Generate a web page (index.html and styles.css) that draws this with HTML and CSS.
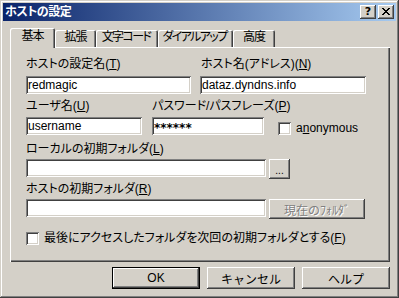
FILE: index.html
```html
<!DOCTYPE html>
<html lang="ja">
<head>
    <meta charset="UTF-8">
    <title>ホストの設定</title>
    <link rel="stylesheet" href="styles.css">
</head>
<body>

<div class="window">
    <div class="titlebar">
        <span class="title">ホストの設定</span>
        <div class="caption-btns">
            <div class="cap help">?</div>
            <div class="cap">
                <svg width="8" height="7" viewBox="0 0 8 7"><path d="M0 0h2v1h1v1h2v-1h1v-1h2v1h-1v1h-1v1h-1v1h1v1h1v1h1v1h-2v-1h-1v-1h-2v1h-1v1h-2v-1h1v-1h1v-1h1v-1h-1v-1h-1v-1h-1z" fill="#000"/></svg>
            </div>
        </div>
    </div>

    <div class="tabs">
        <div class="tab active" style="width:45px">基本</div>
        <div class="tab" style="width:41px">拡張</div>
        <div class="tab tight" style="width:62px">文字コード</div>
        <div class="tab tight" style="width:75px">ダイアルアップ</div>
        <div class="tab" style="width:42px">高度</div>
    </div>

    <div class="panel">
        <div class="row">
            <div class="field-group" style="width:165px">
                <label>ホストの設定名(<u>T</u>)</label>
                <input class="edit" type="text" value="redmagic">
            </div>
            <div class="field-group" style="width:166px">
                <label class="shift">ホスト名(アドレス)(<u>N</u>)</label>
                <input class="edit" type="text" value="dataz.dyndns.info">
            </div>
        </div>

        <div class="row row-user">
            <div class="field-group narrow" style="width:116px">
                <label>ユーザ名(<u>U</u>)</label>
                <input class="edit" type="text" value="username">
            </div>
            <div class="field-group narrow" style="width:112px">
                <label>パスワード/パスフレーズ(<u>P</u>)</label>
                <input class="edit pass" type="text" value="******">
            </div>
            <div class="checkline anon">
                <span class="check"></span>
                <span>a<u>n</u>onymous</span>
            </div>
        </div>

        <div class="row-block local">
            <label>ローカルの初期フォルダ(<u>L</u>)</label>
            <div class="row">
                <input class="edit wide" type="text" value="">
                <button class="btn small">...</button>
            </div>
        </div>

        <div class="row-block host">
            <label>ホストの初期フォルダ(<u>R</u>)</label>
            <div class="row">
                <input class="edit wide" type="text" value="">
                <button class="btn current" disabled>現在のﾌｫﾙﾀﾞ</button>
            </div>
        </div>

        <div class="checkline last">
            <span class="check"></span>
            <span>最後にアクセスしたフォルダを次回の初期フォルダとする(<u>F</u>)</span>
        </div>
    </div>

    <div class="actions">
        <button class="btn push default">OK</button>
        <button class="btn push">キャンセル</button>
        <button class="btn push">ヘルプ</button>
    </div>
</div>

</body>
</html>
```

FILE: styles.css
```css
* {
    box-sizing: border-box;
}
body {
    margin: 0;
    background-color: #d4d0c8;
    font-family: "Liberation Sans", "Noto Sans CJK JP", sans-serif;
    font-size: 12px;
    font-feature-settings: "palt";
    color: #000;
}
.window {
    width: 399px;
    height: 298px;
    padding: 3px;
    background-color: #d4d0c8;
    box-shadow: inset -1px -1px #404040, inset 1px 1px #d4d0c8, inset -2px -2px #808080, inset 2px 2px #fff;
    display: flex;
    flex-direction: column;
}
.titlebar {
    height: 18px;
    display: flex;
    align-items: center;
    justify-content: space-between;
    padding: 0 2px 0 2px;
    background: linear-gradient(to right, #0a246a, #a6caf0);
    color: #fff;
}
.title {
    font-weight: bold;
    line-height: 13px;
    letter-spacing: -0.5px;
}
.caption-btns {
    display: flex;
    gap: 2px;
}
.cap {
    width: 16px;
    height: 14px;
    background-color: #d4d0c8;
    box-shadow: inset -1px -1px #404040, inset 1px 1px #fff, inset -2px -2px #808080;
    display: flex;
    align-items: center;
    justify-content: center;
    color: #000;
}
.cap svg {
    display: block;
    margin-top: -1px;
}
.help {
    font-family: "DejaVu Sans", sans-serif;
    font-weight: bold;
    font-size: 11px;
    line-height: 11px;
    padding-bottom: 1px;
}

/* tabs */
.tabs {
    display: flex;
    align-items: flex-end;
    height: 19px;
    margin-top: 7px;
    padding-left: 7px;
}
.tab {
    height: 17px;
    padding-top: 1px;
    line-height: 13px;
    text-align: center;
    letter-spacing: -1px;
    border-radius: 2px 2px 0 0;
    box-shadow: inset 1px 1px #fff, inset -1px 0 #404040, inset -2px 0 #808080;
    white-space: nowrap;
}
.tab.tight {
    letter-spacing: -1.6px;
    padding-right: 2px;
}
.tab.active {
    height: 20px;
    margin-bottom: -1px;
    padding-top: 2px;
    position: relative;
    z-index: 1;
    background-color: #d4d0c8;
}

/* panel */
.panel {
    width: 380px;
    height: 215px;
    margin-left: 7px;
    padding: 11px 0 0 16px;
    box-shadow: inset 1px 1px #fff, inset -1px -1px #404040, inset -2px -2px #808080;
}
.row {
    display: flex;
    gap: 9px;
}
.field-group label,
.row-block label {
    display: block;
    line-height: 13px;
    white-space: nowrap;
}
.field-group label {
    margin-bottom: 5px;
}
.field-group .shift {
    margin-left: 1px;
}
.field-group.narrow label {
    margin-bottom: 4px;
}
.row-user {
    margin-top: 6px;
    gap: 10px;
}
.edit {
    display: block;
    width: 100%;
    height: 18px;
    margin: 0;
    padding: 0 2px;
    border: none;
    outline: none;
    background-color: #fff;
    box-shadow: inset 1px 1px #808080, inset -1px -1px #fff, inset 2px 2px #404040, inset -2px -2px #d4d0c8;
    font-family: inherit;
    font-size: 12px;
    color: #000;
}
.edit.pass {
    font-family: "DejaVu Sans", sans-serif;
    font-weight: bold;
    font-size: 12px;
    padding-top: 3px;
}
.edit.wide {
    width: 240px;
    flex: none;
}
.checkline {
    display: flex;
    align-items: center;
    gap: 5px;
    line-height: 13px;
    white-space: nowrap;
}
.check {
    width: 13px;
    height: 13px;
    flex: none;
    background-color: #fff;
    box-shadow: inset 1px 1px #808080, inset -1px -1px #fff, inset 2px 2px #404040, inset -2px -2px #d4d0c8;
}
.anon {
    margin-left: 4px;
    margin-top: 22px;
    align-self: flex-start;
}
.row-block label {
    margin-bottom: 3px;
}
.row-block .row {
    gap: 3px;
}
.local {
    margin-top: 8px;
}
.host {
    margin-top: 4px;
}
.last {
    margin-top: 13px;
}

/* buttons */
.btn {
    border: none;
    padding: 0;
    margin: 0;
    background-color: #d4d0c8;
    box-shadow: inset -1px -1px #404040, inset 1px 1px #fff, inset -2px -2px #808080;
    font-family: inherit;
    font-size: 12px;
    color: #000;
}
.btn.small {
    width: 21px;
    height: 20px;
    font-size: 10px;
    line-height: 10px;
    padding-top: 4px;
}
.btn.current {
    width: 96px;
    height: 20px;
    color: #808080;
    text-shadow: 1px 1px #fff;
}
.actions {
    display: flex;
    justify-content: flex-end;
    gap: 7px;
    margin-top: 5px;
    padding-right: 6px;
}
.push {
    width: 88px;
    height: 22px;
}
.push.default {
    box-shadow: inset 0 0 0 1px #000, inset -2px -2px #404040, inset 2px 2px #fff, inset -3px -3px #808080;
}
```
